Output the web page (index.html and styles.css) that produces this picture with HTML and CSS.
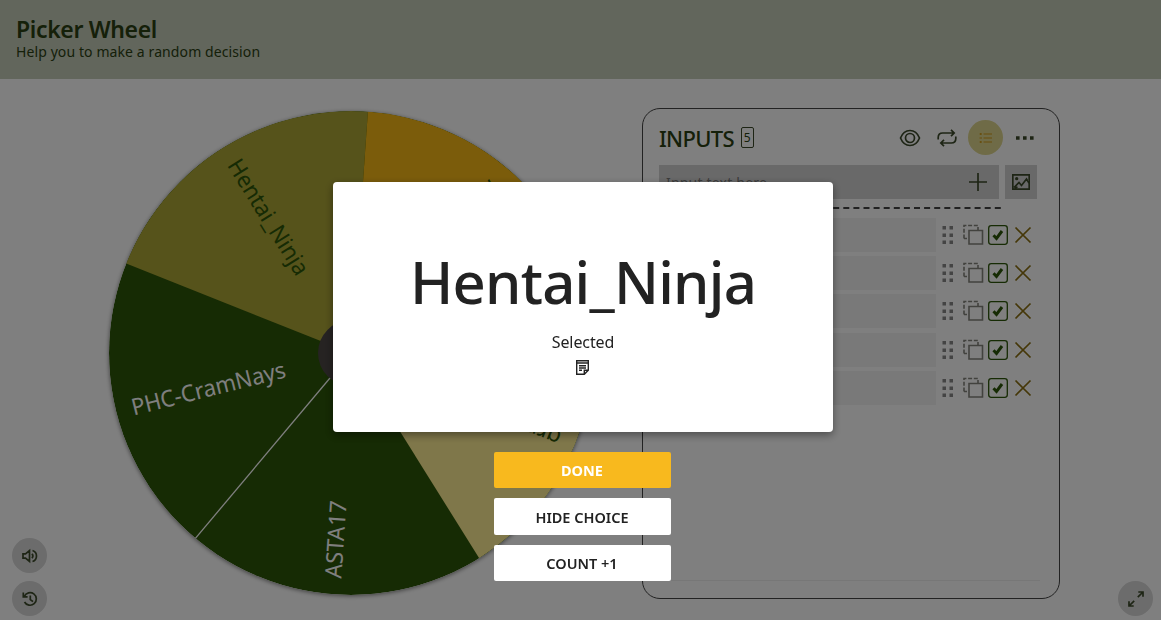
FILE: index.html
```html
<!DOCTYPE html>
<html lang="en">

  <head>

    <title>Picker Wheel</title>

    <meta charset="utf-8"/>

    <link rel="stylesheet" href="styles.css">

  </head>

  <body>

    <svg class="symbols" width="0" height="0">
      <symbol id="row-tools" viewBox="0 0 96 34">
        <g fill="#888">
          <path d="M1.500 8h3.500v3.500h-3.500zM8.500 8h3.500v3.500h-3.500zM1.500 15.500h3.500v3.500h-3.500zM8.500 15.500h3.500v3.500h-3.500zM1.500 22.500h3.500v3.500h-3.500zM8.500 22.500h3.500v3.500h-3.500z"/>
        </g>
        <g fill="none" stroke="#85857d" stroke-width="1.600">
          <path d="M23 20.500v-13h14v5M23 20.500h3" stroke-dasharray="4 1.700"/>
          <path d="M28 12.500h13.500v13.500h-13.500z"/>
        </g>
        <rect x="47.700" y="7.700" width="18.600" height="18.600" rx="2.500" fill="none" stroke="#2c5608" stroke-width="1.300"/>
        <path d="M52.500 17.300l3 3.200 5.500-7.500" fill="none" stroke="#2c5608" stroke-width="3"/>
        <path d="M74.500 9.500l15 15M89.500 9.500l-15 15" fill="none" stroke="#8a6f10" stroke-width="1.700"/>
      </symbol>
    </svg>

    <header class="banner">
      <h1>Picker Wheel</h1>
      <p>Help you to make a random decision</p>
    </header>

    <main class="content">

      <svg class="wheel" viewBox="-242 -242 484 484">
        <circle r="242" fill="#2c5608"/>
        <path d="M0 0L-224.800 -89.500A242 242 0 0 1 16.900 -241.400Z" fill="#ada637"/>
        <path d="M0 0L16.900 -241.400A242 242 0 0 1 234.800 -58.500Z" fill="#f6b917"/>
        <path d="M0 0L234.800 -58.500A242 242 0 0 1 128.200 205.200Z" fill="#ffee94"/>
        <path d="M0 0L-155.600 185.400" stroke="#fff" stroke-width="1.300"/>
        <circle r="33" fill="#4c4645"/>
        <g class="labels">
          <text transform="rotate(58)" x="-225" y="6" textLength="132" lengthAdjust="spacingAndGlyphs">Hentai_Ninja</text>
          <text class="light" transform="rotate(-14)" x="-226" y="8" textLength="158" lengthAdjust="spacingAndGlyphs">PHC-CramNays</text>
          <text class="light" transform="rotate(-86)" x="-226" y="6" textLength="78" lengthAdjust="spacingAndGlyphs">ASTA17</text>
          <text transform="rotate(202)" x="-226" y="6">grr</text>
          <text transform="rotate(130)" x="-222" y="6">A</text>
        </g>
      </svg>

      <section class="panel">
        <div class="panel-head">
          <h2>INPUTS</h2>
          <span class="count">5</span>
          <svg class="icon eye" viewBox="0 0 22 18">
            <path d="M1.500 9C3.500 4 7 1.500 11 1.500S18.500 4 20.500 9C18.500 14 15 16.500 11 16.500S3.500 14 1.500 9z"/>
            <circle cx="11" cy="9" r="4.500"/>
          </svg>
          <svg class="icon loop" viewBox="0 0 20 18">
            <path d="M1.200 10.500V8.500Q1.200 4 5.700 4H17M14 .8L17.200 4 14 7.200M18.800 7.500v2q0 4.500-4.500 4.500H4M7 10.800L3.800 14 7 17.200"/>
          </svg>
          <span class="mode">
            <svg viewBox="0 0 14 12">
              <path d="M4.500 2H13M4.500 6H13M4.500 10H13M.5 2h2.500M.5 6h2.500M.5 10h2.500M1.700 1v2M1.700 9v2"/>
            </svg>
          </span>
          <svg class="dots" viewBox="0 0 18 4">
            <path d="M0 .2h3.600v3.600H0zM7 .2h3.600v3.600H7zM14 .2h3.600v3.600h-3.600z"/>
          </svg>
        </div>

        <div class="entry">
          <div class="field">
            <span>Input text here</span>
            <svg class="icon plus" viewBox="0 0 18 18"><path d="M9 0v18M0 9h18"/></svg>
          </div>
          <div class="picture">
            <svg class="icon" viewBox="0 0 18 16">
              <path d="M.8.8h16.400v14.400H.8zM2 13.500l5-5 2.500 3 5-6.500 2.500 4M2.500 14l3-1"/>
              <circle cx="4.700" cy="4.700" r=".8"/>
            </svg>
          </div>
        </div>

        <svg class="divider" viewBox="0 0 343 2"><path d="M0 1h343"/></svg>

        <ul class="choices">
          <li><span class="choice"></span><svg class="tools"><use href="#row-tools"/></svg></li>
          <li><span class="choice"></span><svg class="tools"><use href="#row-tools"/></svg></li>
          <li><span class="choice"></span><svg class="tools"><use href="#row-tools"/></svg></li>
          <li><span class="choice"></span><svg class="tools"><use href="#row-tools"/></svg></li>
          <li><span class="choice"></span><svg class="tools"><use href="#row-tools"/></svg></li>
        </ul>
      </section>

    </main>

    <div class="corner left">
      <span class="round">
        <svg class="icon" viewBox="0 0 16 14">
          <path d="M1 4.800h2.500L7.500 1.500v11L3.500 9.200H1zM10 4.800q1.800 2.200 0 4.400M10.500 1.500c5.300 1.500 5.300 9.500 0 11"/>
        </svg>
      </span>
      <span class="round">
        <svg class="icon" viewBox="0 0 16 16">
          <path d="M2.300 5.300A6.300 6.300 0 1 1 2.500 11M1.300 1.500v4.300h4.300M8.300 4.500v4l2.700 2.200"/>
        </svg>
      </span>
    </div>

    <div class="corner right">
      <span class="round">
        <svg class="icon" viewBox="0 0 16 16">
          <path d="M9.800 6.200L15 1M10.300 1H15v4.700M6.200 9.800L1 15M1 10.300V15h4.700"/>
        </svg>
      </span>
    </div>

    <div class="overlay">
      <div class="dialog">
        <h2>Hentai_Ninja</h2>
        <p>Selected</p>
        <svg class="note" viewBox="0 0 13 15">
          <path d="M.7.7h11.600v9.500l-4 4H.7zM.7 3h11.600M3 5.700h7M3 8h7M3 10.300h3M8.300 14v-3.800h3.800"/>
        </svg>
      </div>
      <button class="done">DONE</button>
      <button>HIDE CHOICE</button>
      <button>COUNT +1</button>
    </div>

  </body>

</html>
```
FILE: styles.css
```css
* {
  box-sizing: border-box;
}
body {
  margin: 0;
  height: 620px;
  overflow: hidden;
  background: #fff;
  color: #2b4012;
  font-family: "Noto Sans", "Open Sans", sans-serif;
}
h1, h2, p, ul {
  margin: 0;
  padding: 0;
}
.symbols {
  display: none;
}
.banner {
  height: 79px;
  padding: 15px 16px 0;
  background: #c4ccb8;
}
.banner h1 {
  font-size: 23px;
  font-weight: 600;
  line-height: 28px;
  letter-spacing: -0.35px;
}
.banner p {
  font-size: 14px;
  line-height: 18px;
  letter-spacing: 0.1px;
}
.content {
  display: flex;
  align-items: flex-start;
  gap: 49px;
  padding: 29px 0 0 109px;
}
.wheel {
  flex: none;
  width: 484px;
  height: 484px;
  margin-top: 3px;
  border-radius: 50%;
  box-shadow: 0 1px 4px rgba(0, 0, 0, 0.5);
}
.labels {
  font-size: 23px;
  fill: #2c5608;
}
.labels .light {
  fill: #fff;
}
.icon {
  fill: none;
  stroke: #3c4a2a;
  stroke-width: 1.7;
}
.panel {
  display: flex;
  flex-direction: column;
  width: 418px;
  height: 491px;
  padding: 11px 19px 17px 16px;
  border: 1px solid #444;
  border-radius: 18px;
}
.panel-head {
  display: flex;
  align-items: center;
  height: 35px;
}
.panel-head h2 {
  font-size: 22px;
  font-weight: 500;
  letter-spacing: -0.7px;
}
.count {
  width: 13px;
  height: 21px;
  margin: 0 auto 0 7px;
  border: 1px solid #3c4a2a;
  border-radius: 2px;
  font-size: 12px;
  line-height: 20px;
  text-align: center;
}
.eye {
  width: 22px;
  height: 18px;
}
.loop {
  width: 20px;
  height: 18px;
  margin: 0 11px 0 16px;
}
.mode {
  display: flex;
  align-items: center;
  justify-content: center;
  width: 35px;
  height: 35px;
  border-radius: 50%;
  background: #dfd78e;
}
.mode svg {
  width: 14px;
  height: 12px;
  fill: none;
  stroke: #d19b18;
}
.dots {
  width: 18px;
  height: 4px;
  margin: 0 6px 0 13px;
  fill: #3c4a2a;
}
.entry {
  display: flex;
  gap: 6px;
  height: 34px;
  margin-top: 10px;
}
.field {
  display: flex;
  align-items: center;
  justify-content: space-between;
  width: 340px;
  padding: 0 12px 0 7px;
  background: #d2d2d2;
  color: #777;
  font-size: 14px;
  letter-spacing: 0.2px;
}
.plus {
  width: 18px;
  height: 18px;
}
.picture {
  display: flex;
  align-items: center;
  justify-content: center;
  width: 32px;
  background: #d2d2d2;
}
.picture svg {
  width: 18px;
  height: 16px;
}
.divider {
  flex: none;
  width: 343px;
  height: 2px;
  margin-top: 8px;
  fill: none;
  stroke: #444;
  stroke-width: 2;
  stroke-dasharray: 6 4.1;
  stroke-dashoffset: 7.6;
}
.choices {
  display: flex;
  flex: 1;
  flex-direction: column;
  gap: 4.2px;
  margin-top: 9px;
  border-bottom: 1px solid #eee;
  list-style: none;
}
.choices li {
  display: flex;
  gap: 5px;
  height: 34px;
}
.choice {
  flex: none;
  width: 277px;
  background: #f2f2f2;
}
.tools {
  flex: none;
  width: 96px;
  height: 34px;
}
.corner {
  position: fixed;
  bottom: 4px;
  display: flex;
  flex-direction: column;
  gap: 8px;
}
.left {
  left: 12px;
}
.right {
  right: 8px;
}
.round {
  display: flex;
  align-items: center;
  justify-content: center;
  width: 35px;
  height: 35px;
  border-radius: 50%;
  background: #d8d8d8;
}
.round svg {
  width: 16px;
  height: 16px;
}
.overlay {
  position: fixed;
  inset: 0;
  display: flex;
  flex-direction: column;
  align-items: center;
  gap: 10px;
  padding: 182px 0 0 5px;
  background: rgba(0, 0, 0, 0.5);
  color: #222;
}
.dialog {
  display: flex;
  flex-direction: column;
  align-items: center;
  width: 500px;
  height: 250px;
  margin-bottom: 10px;
  padding-top: 60px;
  border-radius: 4px;
  background: #fff;
  box-shadow: 0 3px 8px rgba(0, 0, 0, 0.4);
}
.dialog h2 {
  font-size: 58px;
  font-weight: 500;
  line-height: 80px;
  letter-spacing: -0.75px;
}
.dialog p {
  margin-top: 8px;
  font-size: 16px;
  line-height: 24px;
  letter-spacing: -0.1px;
}
.note {
  width: 13px;
  height: 15px;
  margin: 6px 1px 0 0;
  fill: none;
  stroke: #222;
  stroke-width: 1.4;
}
button {
  width: 177px;
  height: 36.4px;
  margin-right: 2px;
  border: 0;
  border-radius: 2px;
  background: #fff;
  color: #222;
  font-family: inherit;
  font-size: 14.5px;
  font-weight: 600;
}
.done {
  background: #f8b91e;
  color: #fff;
  font-weight: 700;
}
```
